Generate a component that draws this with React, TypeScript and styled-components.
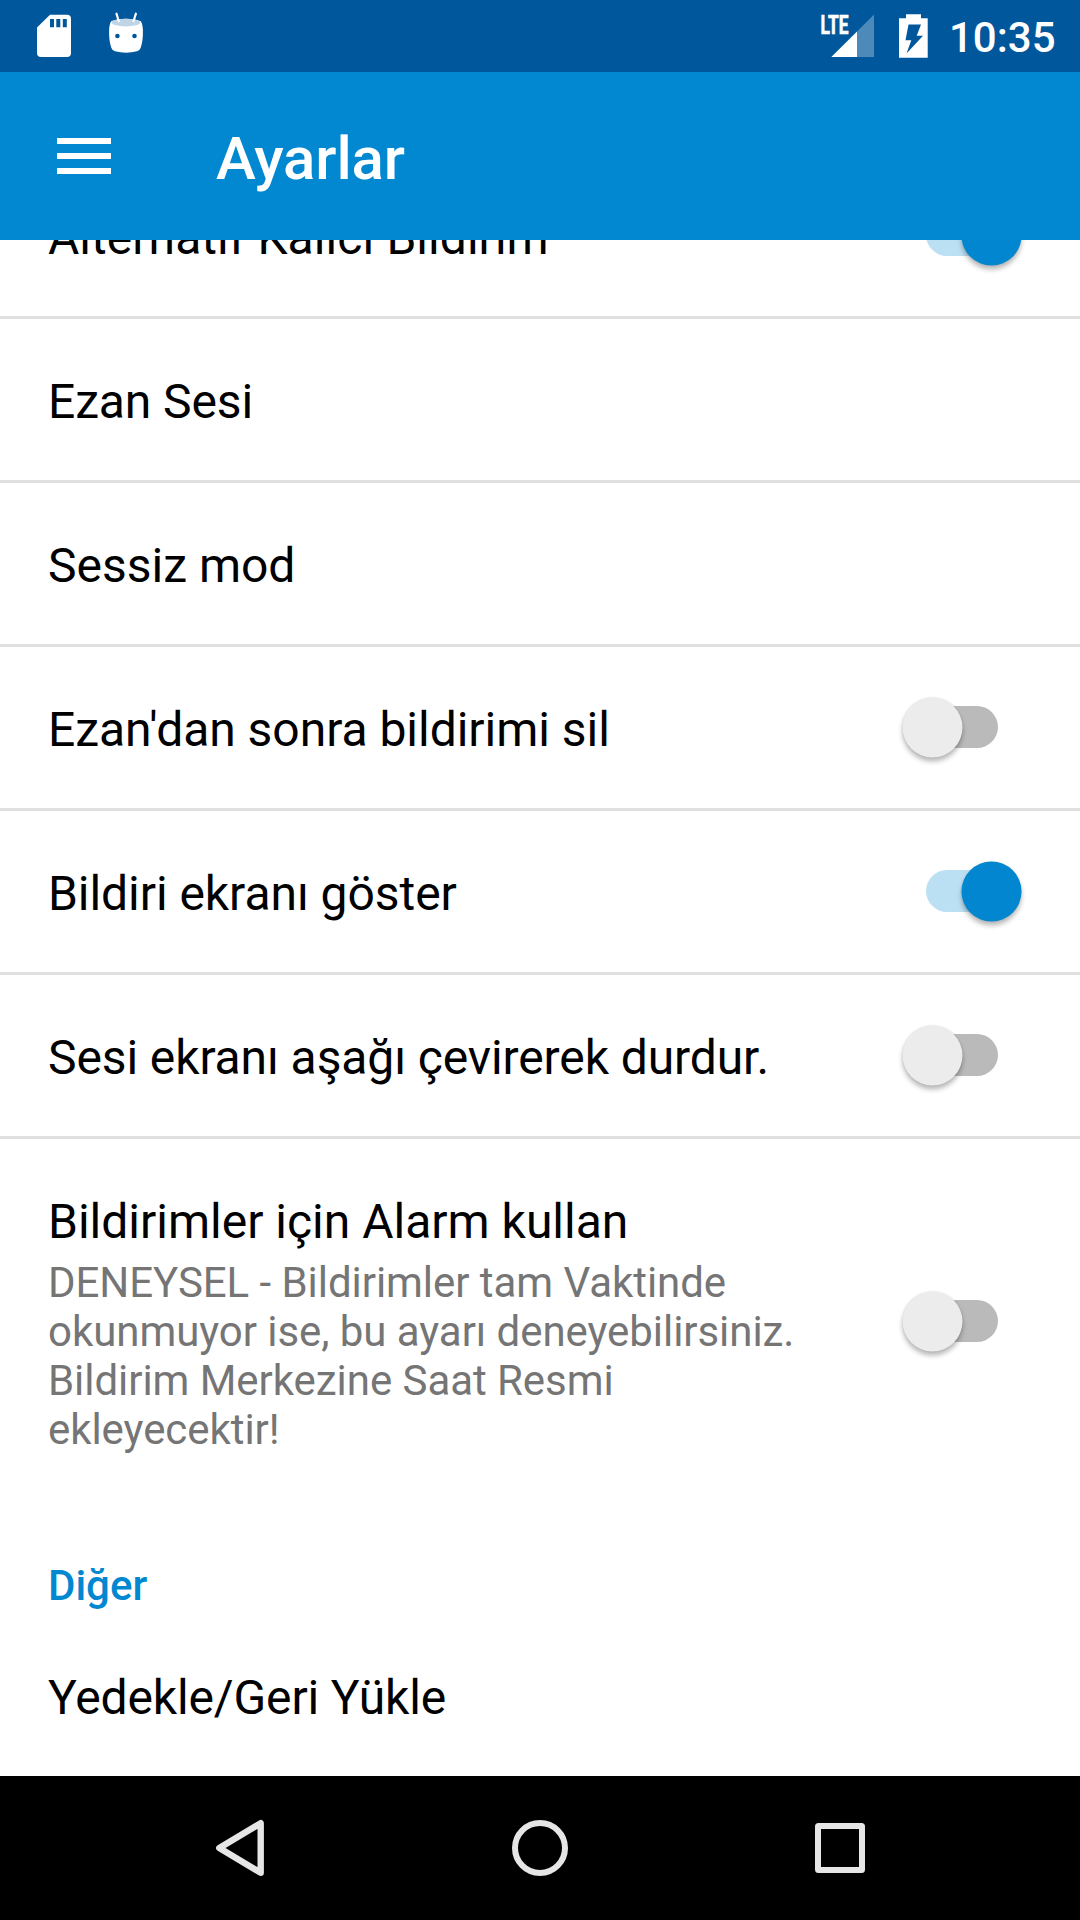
import React, { useState } from "react";
import styled, { createGlobalStyle } from "styled-components";

const GlobalStyle = createGlobalStyle`
  *, *::before, *::after { box-sizing: border-box; }
  html, body { margin: 0; padding: 0; background: #fff; }
`;

const Screen = styled.div`
  width: 1080px;
  height: 1920px;
  display: flex;
  flex-direction: column;
  overflow: hidden;
  background: #fff;
  color: #000;
  font-family: Roboto, "Noto Sans", sans-serif;
`;

const StatusBar = styled.header`
  flex: none;
  height: 72px;
  padding: 0 23px 0 36px;
  display: flex;
  align-items: flex-start;
  justify-content: space-between;
  background: #01579b;
  color: #fff;
`;

const StatusGroup = styled.div`
  display: flex;
  height: 72px;
`;

const StatusIcon = styled.svg<{ $gap?: number }>`
  display: block;
  flex: none;
  margin-right: ${(p) => p.$gap ?? 0}px;
`;

const Clock = styled.time`
  width: 108px;
  font-size: 42px;
  font-weight: 500;
  line-height: 49px;
  padding-top: 13px;
  white-space: nowrap;
`;

const Toolbar = styled.div`
  flex: none;
  height: 168px;
  padding-left: 57px;
  display: flex;
  align-items: center;
  background: #0288d1;
  color: #fff;
`;

const MenuButton = styled.button`
  width: 54px;
  height: 36px;
  padding: 0;
  border: 0;
  background: none;
  display: flex;
  flex-direction: column;
  justify-content: space-between;
`;

const MenuLine = styled.span`
  width: 54px;
  height: 6px;
  background: #fff;
`;

const Title = styled.h1`
  margin: 6px 0 0 105px;
  font-size: 60px;
  font-weight: 500;
  line-height: 70px;
  letter-spacing: -0.1px;
`;

const Viewport = styled.main`
  flex: 1;
  min-height: 0;
  overflow: hidden;
`;

const List = styled.div`
  margin-top: -85px;
  display: flex;
  flex-direction: column;
`;

const Row = styled.div<{ $divided: boolean; $tall?: boolean }>`
  flex: none;
  box-sizing: content-box;
  height: ${(p) => (p.$tall ? 364 : 161)}px;
  padding: 0 58px 0 48px;
  display: flex;
  align-items: center;
  justify-content: space-between;
  border-bottom: ${(p) => (p.$divided ? "3px solid #e0e0e0" : "0")};
`;

const RowText = styled.div`
  align-self: flex-start;
  padding-top: 55px;
  max-width: 780px;
`;

const RowTitle = styled.div<{ $tracking: number }>`
  font-size: 48px;
  line-height: 56px;
  letter-spacing: ${(p) => p.$tracking}px;
  white-space: nowrap;
`;

const Summary = styled.div`
  margin-top: 8px;
  font-size: 42px;
  line-height: 49px;
  letter-spacing: -0.05px;
  color: #757575;
  white-space: pre-line;
`;

const Track = styled.button<{ $on: boolean; $lift: number }>`
  flex: none;
  width: 72px;
  height: 42px;
  margin: 0 24px ${(p) => p.$lift}px 0;
  padding: 0;
  border: 0;
  border-radius: 21px;
  display: flex;
  align-items: center;
  justify-content: center;
  background: ${(p) => (p.$on ? "#bce0f3" : "#bababa")};
`;

const Thumb = styled.span<{ $on: boolean }>`
  flex: none;
  width: 60px;
  height: 60px;
  border-radius: 50%;
  transform: translate(${(p) => (p.$on ? 29.5 : -29.5)}px, 0.5px);
  background: ${(p) => (p.$on ? "#0286d0" : "#ececec")};
  box-shadow: 0 4px 5px rgba(0, 0, 0, 0.28), 0 0 2px rgba(0, 0, 0, 0.1);
`;

const SectionTitle = styled.h2`
  flex: none;
  height: 112px;
  margin: 0;
  padding: 58px 48px 0;
  font-size: 42px;
  font-weight: 500;
  line-height: 49px;
  color: #0288d1;
`;

const NavBar = styled.nav`
  flex: none;
  height: 144px;
  display: flex;
  align-items: center;
  justify-content: center;
  gap: 156px;
  background: #000;
`;

const NavButton = styled.button`
  width: 144px;
  height: 144px;
  padding: 0;
  border: 0;
  background: none;
  display: flex;
`;

type Setting = {
  id: string;
  title: string;
  tracking?: number;
  summary?: string;
  checked?: boolean;
  divided: boolean;
};

const notificationSettings: Setting[] = [
  { id: "ongoing", title: "Alternatif Kalıcı Bildirim", tracking: 0.04, checked: true, divided: true },
  { id: "sound", title: "Ezan Sesi", tracking: -0.12, divided: true },
  { id: "silent", title: "Sessiz mod", divided: true },
  { id: "clear", title: "Ezan'dan sonra bildirimi sil", tracking: -0.03, checked: false, divided: true },
  { id: "screen", title: "Bildiri ekranı göster", tracking: -0.05, checked: true, divided: true },
  { id: "flip", title: "Sesi ekranı aşağı çevirerek durdur.", tracking: -0.1, checked: false, divided: true },
  {
    id: "alarm",
    title: "Bildirimler için Alarm kullan",
    summary:
      "DENEYSEL - Bildirimler tam Vaktinde\nokunmuyor ise, bu ayarı deneyebilirsiniz.\nBildirim Merkezine Saat Resmi\nekleyecektir!",
    checked: false,
    divided: false,
  },
];

const otherSettings: Setting[] = [
  { id: "backup", title: "Yedekle/Geri Yükle", tracking: -0.13, divided: false },
];

function SettingRow({ setting }: { setting: Setting }) {
  const [on, setOn] = useState(setting.checked ?? false);
  return (
    <Row $divided={setting.divided} $tall={!!setting.summary}>
      <RowText>
        <RowTitle $tracking={setting.tracking ?? 0}>{setting.title}</RowTitle>
        {setting.summary && <Summary>{setting.summary}</Summary>}
      </RowText>
      {setting.checked !== undefined && (
        <Track
          $on={on}
          $lift={setting.summary ? 0 : 1}
          role="switch"
          aria-checked={on}
          onClick={() => setOn(!on)}
        >
          <Thumb $on={on} />
        </Track>
      )}
    </Row>
  );
}

function SdCardIcon() {
  return (
    <StatusIcon $gap={36} width="36" height="72" viewBox="36 0 36 72">
      <path
        fill="#fff"
        d="M50 14.7H67Q71 14.7 71 18.7V53Q71 57 67 57H41Q37 57 37 53V27.5Z"
      />
      <path fill="#01579b" d="M50 19h4v8.3h-4zM56.3 19h4v8.3h-4zM62.8 19h4v8.3h-4z" />
    </StatusIcon>
  );
}

function DroidIcon() {
  return (
    <StatusIcon width="36" height="72" viewBox="108 0 36 72">
      <path
        fill="#fff"
        d="M111.5 21Q126 16.5 140.5 21Q142.5 23 142.9 30Q143.2 41 140.6 48Q139.8 50.5 137 51.3Q126 54.2 115 51.3Q112.2 50.5 111.4 48Q108.8 41 109.1 30Q109.5 23 111.5 21Z"
      />
      <ellipse cx="126" cy="22.6" rx="14.3" ry="3.9" fill="#bfd5e6" />
      <path
        d="M116.5 13.7L118.7 21M135.9 13.7L133.6 21"
        stroke="#fff"
        strokeWidth="2.2"
        strokeLinecap="round"
      />
      <circle cx="117.4" cy="36" r="2.3" fill="#01579b" />
      <circle cx="134.5" cy="36" r="2.3" fill="#01579b" />
    </StatusIcon>
  );
}

function SignalIcon() {
  return (
    <StatusIcon $gap={23} width="56" height="72" viewBox="820 0 56 72">
      <path fill="#4d89b9" d="M857 31.5L874 14.5V57H857Z" />
      <path fill="#fff" d="M831.3 57L857 31.5V57Z" />
      <text
        x="820.5"
        y="33.5"
        fill="#fff"
        stroke="#fff"
        strokeWidth="0.7"
        fontFamily="Roboto, sans-serif"
        fontWeight="700"
        fontSize="26"
        textLength="28"
        lengthAdjust="spacingAndGlyphs"
      >
        LTE
      </text>
    </StatusIcon>
  );
}

function BatteryIcon() {
  return (
    <StatusIcon $gap={21} width="29" height="72" viewBox="899 0 29 72">
      <path fill="#fff" d="M906 14.3h15v4h6.7v39.4h-28.7v-39.4h7z" />
      <path
        fill="#01579b"
        d="M908.5 24.5H921L916.7 35.8H923L906.5 53.5L911.3 40.3H905.5Z"
      />
    </StatusIcon>
  );
}

export default function App() {
  return (
    <>
      <GlobalStyle />
      <Screen>
        <StatusBar>
          <StatusGroup>
            <SdCardIcon />
            <DroidIcon />
          </StatusGroup>
          <StatusGroup>
            <SignalIcon />
            <BatteryIcon />
            <Clock>10:35</Clock>
          </StatusGroup>
        </StatusBar>
        <Toolbar>
          <MenuButton aria-label="Menü">
            <MenuLine />
            <MenuLine />
            <MenuLine />
          </MenuButton>
          <Title>Ayarlar</Title>
        </Toolbar>
        <Viewport>
          <List>
            {notificationSettings.map((s) => (
              <SettingRow key={s.id} setting={s} />
            ))}
            <SectionTitle>Diğer</SectionTitle>
            {otherSettings.map((s) => (
              <SettingRow key={s.id} setting={s} />
            ))}
          </List>
        </Viewport>
        <NavBar>
          <NavButton aria-label="Geri">
            <svg width="144" height="144" viewBox="168 0 144 144" fill="none">
              <path d="M260.7 47.2V96.8L219.3 72Z" stroke="#e6e6e6" strokeWidth="6.4" strokeLinejoin="round" />
            </svg>
          </NavButton>
          <NavButton aria-label="Ana ekran">
            <svg width="144" height="144" viewBox="468 0 144 144" fill="none">
              <circle cx="540" cy="72" r="25" stroke="#e6e6e6" strokeWidth="6" />
            </svg>
          </NavButton>
          <NavButton aria-label="Son uygulamalar">
            <svg width="144" height="144" viewBox="768 0 144 144" fill="none">
              <path
                fill="#e6e6e6"
                fillRule="evenodd"
                d="M818.5 47H861.5Q865 47 865 50.5V93.5Q865 97 861.5 97H818.5Q815 97 815 93.5V50.5Q815 47 818.5 47ZM821 53V91H859V53Z"
              />
            </svg>
          </NavButton>
        </NavBar>
      </Screen>
    </>
  );
}
